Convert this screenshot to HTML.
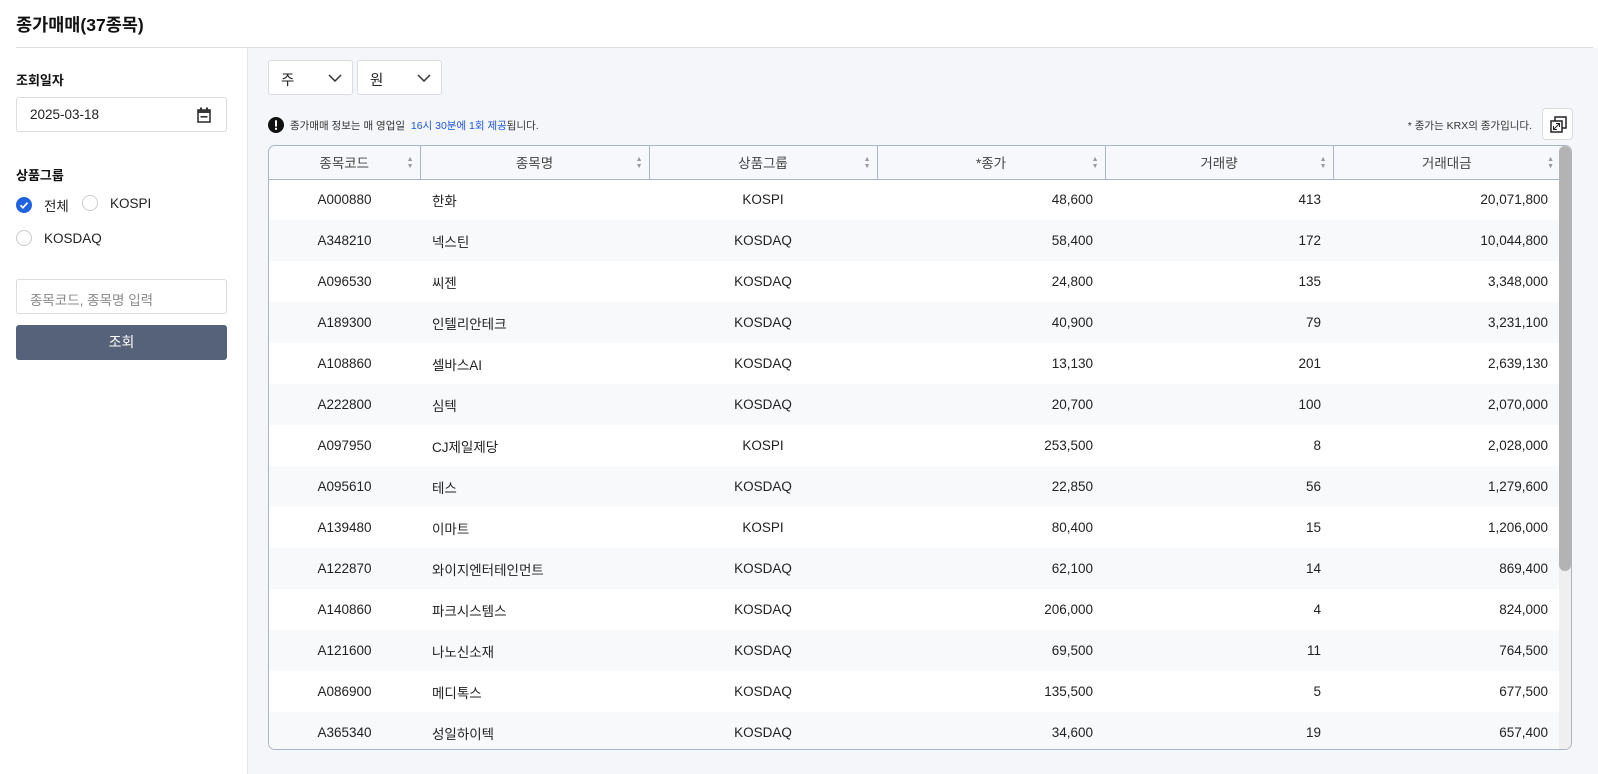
<!DOCTYPE html>
<html><head><meta charset="utf-8"><style>
*{box-sizing:border-box;margin:0;padding:0}
body{width:1598px;height:774px;overflow:hidden;background:#fff;font-family:"Liberation Sans","Noto Sans CJK KR",sans-serif;color:#222;position:relative}
.title{position:absolute;left:16px;top:12px;font-size:17.5px;font-weight:bold;color:#111}
.hr{position:absolute;left:16px;right:5px;top:47px;border-top:1px solid #dcdde3}
.left{position:absolute;left:0;top:48px;width:248px;bottom:0;border-right:1px solid #e3e5ea;background:#fff}
.right{position:absolute;left:248px;top:48px;right:0;bottom:0;background:#f5f6fa}
.lbl{position:absolute;left:16px;font-size:13px;font-weight:bold;color:#111}
.box{position:absolute;left:16px;width:211px;height:35px;border:1px solid #d9dbe0;border-radius:3px;background:#fff;font-size:13.5px;padding:9px 13px}
.btn{position:absolute;left:16px;width:211px;height:35px;background:#55627a;border-radius:3px;color:#fff;font-size:14px;text-align:center;line-height:35px}
.radio{position:absolute;font-size:13.5px;display:flex;align-items:center}
.rc{width:16px;height:16px;border-radius:50%;border:1px solid #ccc;background:#fff;margin-right:12px;position:relative}
.rc.on{background:#1f63e0;border-color:#1f63e0}
.sel{position:absolute;top:60px;width:85px;height:35px;border:1px solid #d9dbe0;border-radius:3px;background:#fff;font-size:14.5px;padding:8px 12px}
.sel svg{position:absolute;right:10px;top:13px}
.info{position:absolute;left:268px;top:117px;font-size:10.5px;color:#333;display:flex;align-items:center}
.table{position:absolute;left:268px;top:145px;width:1304px;height:605px;border:1px solid #a9b4c6;border-radius:7px;overflow:hidden;background:#fff}
table{border-collapse:collapse;width:1291px;font-size:13.5px;table-layout:fixed}
th{height:33px;background:#f7f8fb;font-weight:normal;color:#444;border-bottom:1px solid #a9b4c6;border-right:1px solid #a9b4c6;position:relative}
th:last-child{border-right:none}
th .ar{position:absolute;right:6px;top:10px;font-size:7px;line-height:7px;color:#999}
td{height:41px;padding:0 12px}
tr:nth-child(odd) td{background:#f7f9fb}
.c{text-align:center}.r{text-align:right}
.sb{position:absolute;right:0;top:0;width:12px;height:100%;background:#efefef}
.sb div{width:12px;height:425px;background:#b3b3b3;border-radius:6px}
</style></head><body>
<div class="title">종가매매(37종목)</div>
<div class="hr"></div>
<div class="left">
<div class="lbl" style="top:22px">조회일자</div>
<div class="box" style="top:49px;color:#222">2025-03-18
<svg style="position:absolute;right:15px;top:9px" width="14" height="16" viewBox="0 0 14 16"><rect x="1" y="3" width="12" height="12" fill="none" stroke="#333" stroke-width="1.6"/><rect x="1" y="3" width="12" height="3" fill="#333"/><rect x="3" y="0.5" width="2" height="3" fill="#333"/><rect x="9" y="0.5" width="2" height="3" fill="#333"/><rect x="3.5" y="9" width="7" height="1.6" fill="#333"/></svg></div>
<div class="lbl" style="top:117px">상품그룹</div>
<div class="radio" style="left:16px;top:147px"><span class="rc on"><svg width="16" height="16" style="position:absolute;left:-1px;top:-1px"><path d="M4.5 8.3l2.4 2.4 4.6-5" fill="none" stroke="#fff" stroke-width="1.8"/></svg></span>전체</div>
<div class="radio" style="left:82px;top:147px"><span class="rc"></span>KOSPI</div>
<div class="radio" style="left:16px;top:182px"><span class="rc"></span>KOSDAQ</div>
<div class="box" style="top:231px;color:#888">종목코드, 종목명 입력</div>
<div class="btn" style="top:277px">조회</div>
</div>
<div class="right"></div>
<div class="sel" style="left:268px">주<svg width="14" height="8"><path d="M1 1l6 6 6-6" fill="none" stroke="#333" stroke-width="1.5"/></svg></div>
<div class="sel" style="left:357px">원<svg width="14" height="8"><path d="M1 1l6 6 6-6" fill="none" stroke="#333" stroke-width="1.5"/></svg></div>
<div class="info"><svg width="16" height="16" style="margin-right:6px"><circle cx="8" cy="8" r="8" fill="#111"/><rect x="7" y="3.3" width="2" height="6.3" fill="#fff"/><rect x="7" y="10.8" width="2" height="2" fill="#fff"/></svg>종가매매 정보는 매 영업일 &nbsp;<span style="color:#1d55d6">16시 30분에 1회 제공</span>됩니다.</div>
<div style="position:absolute;right:66px;top:118px;font-size:10.5px;color:#333">* 종가는 KRX의 종가입니다.</div>
<div style="position:absolute;left:1542px;top:108px;width:31px;height:32px;border:1px solid #d9dbe0;border-radius:4px;background:#fff"><svg width="31" height="32"><rect x="12" y="8" width="11" height="11" fill="none" stroke="#222" stroke-width="1.5"/><rect x="8" y="12" width="11" height="11" fill="#fff" stroke="#222" stroke-width="1.5"/><path d="M10.5 20.5l6-6M13 14.5h3.5v3.5M10.5 17v3.5H14" fill="none" stroke="#222" stroke-width="1"/></svg></div>
<div class="table">
<table>
<colgroup><col style="width:151px"><col style="width:229px"><col style="width:228px"><col style="width:228px"><col style="width:228px"><col></colgroup>
<tr><th>종목코드<span class="ar">▲<br>▼</span></th><th>종목명<span class="ar">▲<br>▼</span></th><th>상품그룹<span class="ar">▲<br>▼</span></th><th>*종가<span class="ar">▲<br>▼</span></th><th>거래량<span class="ar">▲<br>▼</span></th><th>거래대금<span class="ar">▲<br>▼</span></th></tr>
<tr><td class="c">A000880</td><td>한화</td><td class="c">KOSPI</td><td class="r">48,600</td><td class="r">413</td><td class="r">20,071,800</td></tr>
<tr><td class="c">A348210</td><td>넥스틴</td><td class="c">KOSDAQ</td><td class="r">58,400</td><td class="r">172</td><td class="r">10,044,800</td></tr>
<tr><td class="c">A096530</td><td>씨젠</td><td class="c">KOSDAQ</td><td class="r">24,800</td><td class="r">135</td><td class="r">3,348,000</td></tr>
<tr><td class="c">A189300</td><td>인텔리안테크</td><td class="c">KOSDAQ</td><td class="r">40,900</td><td class="r">79</td><td class="r">3,231,100</td></tr>
<tr><td class="c">A108860</td><td>셀바스AI</td><td class="c">KOSDAQ</td><td class="r">13,130</td><td class="r">201</td><td class="r">2,639,130</td></tr>
<tr><td class="c">A222800</td><td>심텍</td><td class="c">KOSDAQ</td><td class="r">20,700</td><td class="r">100</td><td class="r">2,070,000</td></tr>
<tr><td class="c">A097950</td><td>CJ제일제당</td><td class="c">KOSPI</td><td class="r">253,500</td><td class="r">8</td><td class="r">2,028,000</td></tr>
<tr><td class="c">A095610</td><td>테스</td><td class="c">KOSDAQ</td><td class="r">22,850</td><td class="r">56</td><td class="r">1,279,600</td></tr>
<tr><td class="c">A139480</td><td>이마트</td><td class="c">KOSPI</td><td class="r">80,400</td><td class="r">15</td><td class="r">1,206,000</td></tr>
<tr><td class="c">A122870</td><td>와이지엔터테인먼트</td><td class="c">KOSDAQ</td><td class="r">62,100</td><td class="r">14</td><td class="r">869,400</td></tr>
<tr><td class="c">A140860</td><td>파크시스템스</td><td class="c">KOSDAQ</td><td class="r">206,000</td><td class="r">4</td><td class="r">824,000</td></tr>
<tr><td class="c">A121600</td><td>나노신소재</td><td class="c">KOSDAQ</td><td class="r">69,500</td><td class="r">11</td><td class="r">764,500</td></tr>
<tr><td class="c">A086900</td><td>메디톡스</td><td class="c">KOSDAQ</td><td class="r">135,500</td><td class="r">5</td><td class="r">677,500</td></tr>
<tr><td class="c">A365340</td><td>성일하이텍</td><td class="c">KOSDAQ</td><td class="r">34,600</td><td class="r">19</td><td class="r">657,400</td></tr>
</table>
<div class="sb"><div></div></div>
</div>
</body></html>
